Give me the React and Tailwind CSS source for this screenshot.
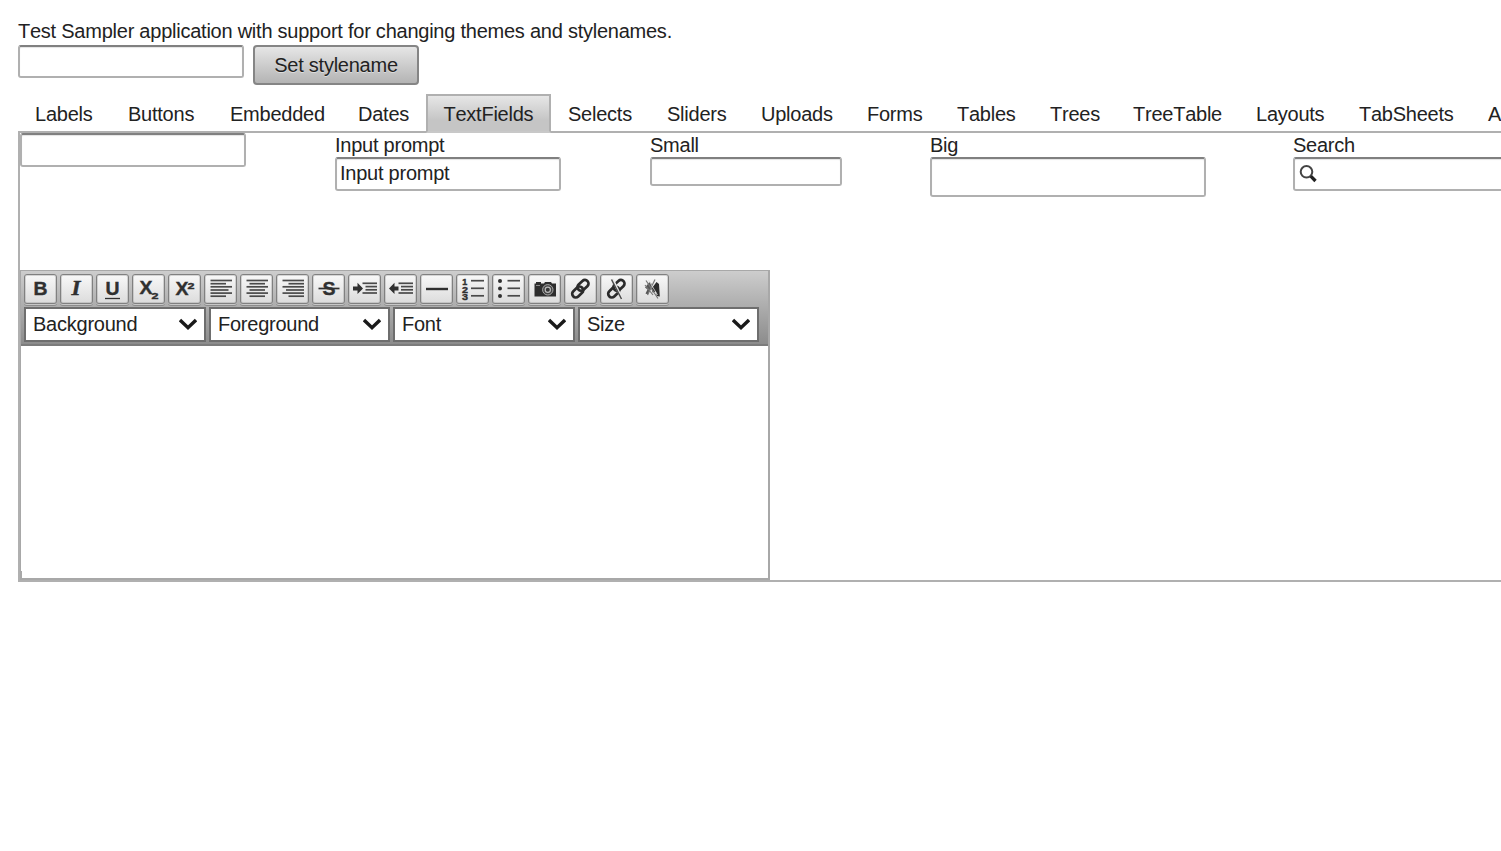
import React from "react";

const INK = "#303030";

const bars = (rows) =>
  rows.map(([x1, x2, y], i) => (
    <path key={i} d={`M${x1} ${y}H${x2}`} stroke="#4a4a4a" strokeWidth="1.7" />
  ));

const Glyph = ({ x, y, size = 19, width, italic, children }) => (
  <text
    x={x}
    y={y}
    fontSize={size}
    fontWeight="700"
    fontStyle={italic ? "italic" : "normal"}
    fontFamily={italic ? "Liberation Serif, serif" : "Liberation Sans, sans-serif"}
    textLength={width}
    lengthAdjust="spacingAndGlyphs"
    letterSpacing="0"
    fill={INK}
    stroke={INK}
    strokeWidth="0.4"
  >
    {children}
  </text>
);

const chain = (
  <g fill="none" stroke="#2b2b2b" strokeWidth="2.7">
    <rect x="-6.200" y="-3.600" width="12.400" height="7.200" rx="3.600" transform="translate(19 11.300) rotate(-43)" />
    <rect x="-6.200" y="-3.600" width="12.400" height="7.200" rx="3.600" transform="translate(13.700 18) rotate(-43)" />
  </g>
);

const TOOLS = [
  ["Bold", <Glyph x={9.5} y={21.3} width={14}>B</Glyph>],
  ["Italic", <Glyph x={11.5} y={21} size={20} width={9} italic>I</Glyph>],
  ["Underline", <><Glyph x={9.5} y={21.3} width={14}>U</Glyph><path d="M9 24.500H24" stroke={INK} strokeWidth="1.300" /></>],
  ["Subscript", <><Glyph x={7.5} y={20} width={13}>X</Glyph><Glyph x={19.5} y={25} size={9.5} width={7}>2</Glyph></>],
  ["Superscript", <><Glyph x={7.5} y={21} width={13}>X</Glyph><Glyph x={19.5} y={15} size={9.5} width={7}>2</Glyph></>],
  ["Align left", bars([[6.5, 28, 6.5], [6.5, 22, 9.7], [6.5, 28, 12.8], [6.5, 24.5, 16], [6.5, 28, 19.1], [6.5, 22, 22.2]])],
  ["Center", bars([[6.5, 28, 6.5], [9.5, 25, 9.7], [6.5, 28, 12.8], [9.5, 25, 16], [6.5, 28, 19.1], [9.5, 25, 22.2]])],
  ["Align right", bars([[6.5, 28, 6.5], [12.5, 28, 9.7], [6.5, 28, 12.8], [10, 28, 16], [6.5, 28, 19.1], [12.5, 28, 22.2]])],
  ["Strikethrough", <><Glyph x={10.5} y={21} width={13}>S</Glyph><path d="M6.500 14.500H27.500" stroke={INK} strokeWidth="1.700" /></>],
  ["Indent", <><path d="M5 12.400h4.500V8.800l5.500 5.600-5.500 5.600V16.400H5z" fill={INK} />{bars([[14.5, 29, 9.3], [17.5, 29, 12.6], [17.5, 29, 15.8], [14.5, 29, 19]])}</>],
  ["Outdent", <><path d="M14.500 12.400h-4V8.800L5 14.400l5.500 5.600V16.400h4z" fill={INK} />{bars([[14.5, 29, 9.3], [17, 29, 12.6], [17, 29, 15.8], [14.5, 29, 19]])}</>],
  ["Line", <path d="M6 15H28" stroke={INK} strokeWidth="2.400" />],
  ["Numbered list", <><Glyph x={6.3} y={10.8} size={9} width={5}>1</Glyph><Glyph x={6} y={18.5} size={9} width={6}>2</Glyph><Glyph x={6} y={26.2} size={9} width={6}>3</Glyph>{bars([[15, 28, 6.7], [15, 28, 14.3], [15, 28, 21.8]])}</>],
  ["Bulleted list", <><circle cx="8" cy="7" r="2" fill={INK} /><circle cx="8" cy="14.500" r="2" fill={INK} /><circle cx="8" cy="22" r="2" fill={INK} />{bars([[15.5, 28, 6.7], [15.5, 28, 14.3], [15.5, 28, 21.8]])}</>],
  ["Image", <><path d="M6.500 9.500H8V8h5v1.500h3l1-1.500h6l1 1.500h4V22.500h-21.500z" fill="#2d2d2d" /><circle cx="19.800" cy="15.800" r="5.200" fill="#444" stroke="#aaa" strokeWidth="1" /><circle cx="19.800" cy="15.800" r="2.600" fill="#333" stroke="#bbb" strokeWidth="1.200" /><path d="M8 11.500h4" stroke="#888" /></>],
  ["Link", chain],
  ["Unlink", <>{chain}<path d="M12.500 5 22 25" stroke="#e8e8e8" strokeWidth="2.400" /><path d="M11.500 5.500 21.500 25" stroke="#4a4a4a" strokeWidth="1.500" /></>],
  ["Clear format", <><path d="M9 13.500 13.500 8l3 2.500-1.500 4-3 6-2.500-1 2-4z" fill="#555" /><path d="M16 14l4.500-6 2.500 2 .8 12.500-3-.5-.8-4.500-3.500 1z" fill="#2b2b2b" /><path d="M10 6.500 22 24.500M9 11l8 10M19 5.500 11.500 21" stroke="#777" strokeWidth="1.200" /><path d="M12.500 6 21.500 21" stroke="#ddd" strokeWidth=".8" /></>],
];

const TABS = [
  ["Labels", "w-[93px]"],
  ["Buttons", "w-[102px]"],
  ["Embedded", "w-[128px]"],
  ["Dates", "w-[85px]"],
  ["TextFields", "w-[125px]"],
  ["Selects", "w-[99px]"],
  ["Sliders", "w-[94px]"],
  ["Uploads", "w-[106px]"],
  ["Forms", "w-[90px]"],
  ["Tables", "w-[93px]"],
  ["Trees", "w-[83px]"],
  ["TreeTable", "w-[123px]"],
  ["Layouts", "w-[103px]"],
  ["TabSheets", "w-[129px]"],
  ["Accordions", "w-[130px]"],
];

const SELECTS = [
  ["Background", "w-[182px]"],
  ["Foreground", "w-[181px]"],
  ["Font", "w-[182px]"],
  ["Size", "w-[181px]"],
];

const Field = ({ size, children }) => (
  <div
    className={`${size} shrink-0 rounded-[3px] border-2 border-[#b0b0b0] border-t-[#808080] bg-white shadow-[inset_0_1px_1px_#e4e4e4]`}
  >
    {children}
  </div>
);

const Column = ({ width, label, children }) => (
  <div className={`${width} shrink-0`}>
    <div className="h-6 leading-6">{label}</div>
    {children}
  </div>
);

export default function App() {
  return (
    <div className="h-[851px] w-[1501px] overflow-hidden bg-white pl-[18px] pt-[19px] font-['Liberation_Sans',Arial,sans-serif] text-[20px] tracking-[-0.24px] text-[#222] [font-kerning:none]">
      <div className="h-[26px] whitespace-nowrap leading-6">
        <span>Test Sampler application with support for changing themes and stylenames.</span>
      </div>
      <div className="flex h-[49px] items-start gap-[9px]">
        <Field size="h-[33px] w-[226px]" />
        <button className="h-10 w-[166px] rounded-[4px] border-2 border-[#858585] bg-linear-to-b from-[#e6e6e6] to-[#b4b4b4] leading-9 tracking-[-0.24px] [text-shadow:0_1px_0_#ddd]">
          Set stylename
        </button>
      </div>
      <div className="flex w-[1583px]">
        {TABS.map(([name, width]) => (
          <div
            key={name}
            className={`${width} h-[39px] shrink-0 border-b-2 pt-2 leading-6 ${
              name === "TextFields"
                ? "border-x-2 border-t-2 border-[#b0b0b0] border-b-[#c8c8c8] bg-linear-to-b from-[#e6e6e6] to-[#c5c5c5] to-70% pl-[15.5px] !pt-1.5"
                : "border-[#b0b0b0] pl-[17px]"
            }`}
          >
            {name}
          </div>
        ))}
      </div>
      <div className="h-[449px] w-[1600px] border-b-2 border-l-2 border-[#b0b0b0]">
        <div className="flex h-[137px]">
          <div className="w-[315px] shrink-0">
            <Field size="h-[34px] w-[226px]" />
          </div>
          <Column width="w-[315px]" label="Input prompt">
            <Field size="h-[34px] w-[226px]">
              <div className="pl-[3px] leading-[29px]">Input prompt</div>
            </Field>
          </Column>
          <Column width="w-[280px]" label="Small">
            <Field size="h-[29px] w-[192px]" />
          </Column>
          <Column width="w-[363px]" label="Big">
            <Field size="h-10 w-[276px]" />
          </Column>
          <Column width="w-[230px]" label="Search">
            <Field size="h-[34px] w-[226px]">
              <svg className="ml-1 mt-[5px]" width="20" height="20" viewBox="0 0 20 20" fill="none">
                <circle cx="7.500" cy="7.800" r="5.800" stroke="#444" strokeWidth="2" />
                <path d="M11.800 12.200 16.500 17" stroke="#222" strokeWidth="3.300" />
              </svg>
            </Field>
          </Column>
        </div>
        <div className="h-[310px] w-[750px] border-b-2 border-l border-r-2 border-t border-[#a8a8a8]">
          <div className="h-[75px] border-b-2 border-[#7c7c7c] bg-linear-to-b from-[#cdcdcd] to-[#8c8c8c] pl-[3px] pt-[3px]">
            <div className="flex h-[33px] gap-[3px]">
              {TOOLS.map(([name, icon]) => (
                <button
                  key={name}
                  aria-label={name}
                  className="h-[30px] w-[33px] rounded-[3px] border border-[#808080] bg-linear-to-b from-[#f8f8f8] to-[#dcdcdc] shadow-[0_1px_0_#c8c8c8,0_2px_0_#8c8c8c,inset_0_0_0_1px_#9a9a9a60]"
                >
                  <svg className="-ml-px -mt-px block overflow-visible" width="33" height="30" viewBox="0 0 33 30">
                    {icon}
                  </svg>
                </button>
              ))}
            </div>
            <div className="flex gap-[3px]">
              {SELECTS.map(([name, width]) => (
                <div
                  key={name}
                  className={`${width} flex h-[35px] items-center justify-between border-2 border-[#6e6e6e] bg-white px-[7px]`}
                >
                  <span className="pb-0.5">{name}</span>
                  <svg width="18" height="13" viewBox="0 0 18 13" fill="none">
                    <path d="M1 2 9 9.700 17 2" stroke="#1a1a1a" strokeWidth="3.400" />
                  </svg>
                </div>
              ))}
            </div>
          </div>
          <div className="flex h-[232px] items-end bg-white">
            <div className="h-[7px] w-px bg-[#a8a8a8]" />
          </div>
        </div>
      </div>
    </div>
  );
}
